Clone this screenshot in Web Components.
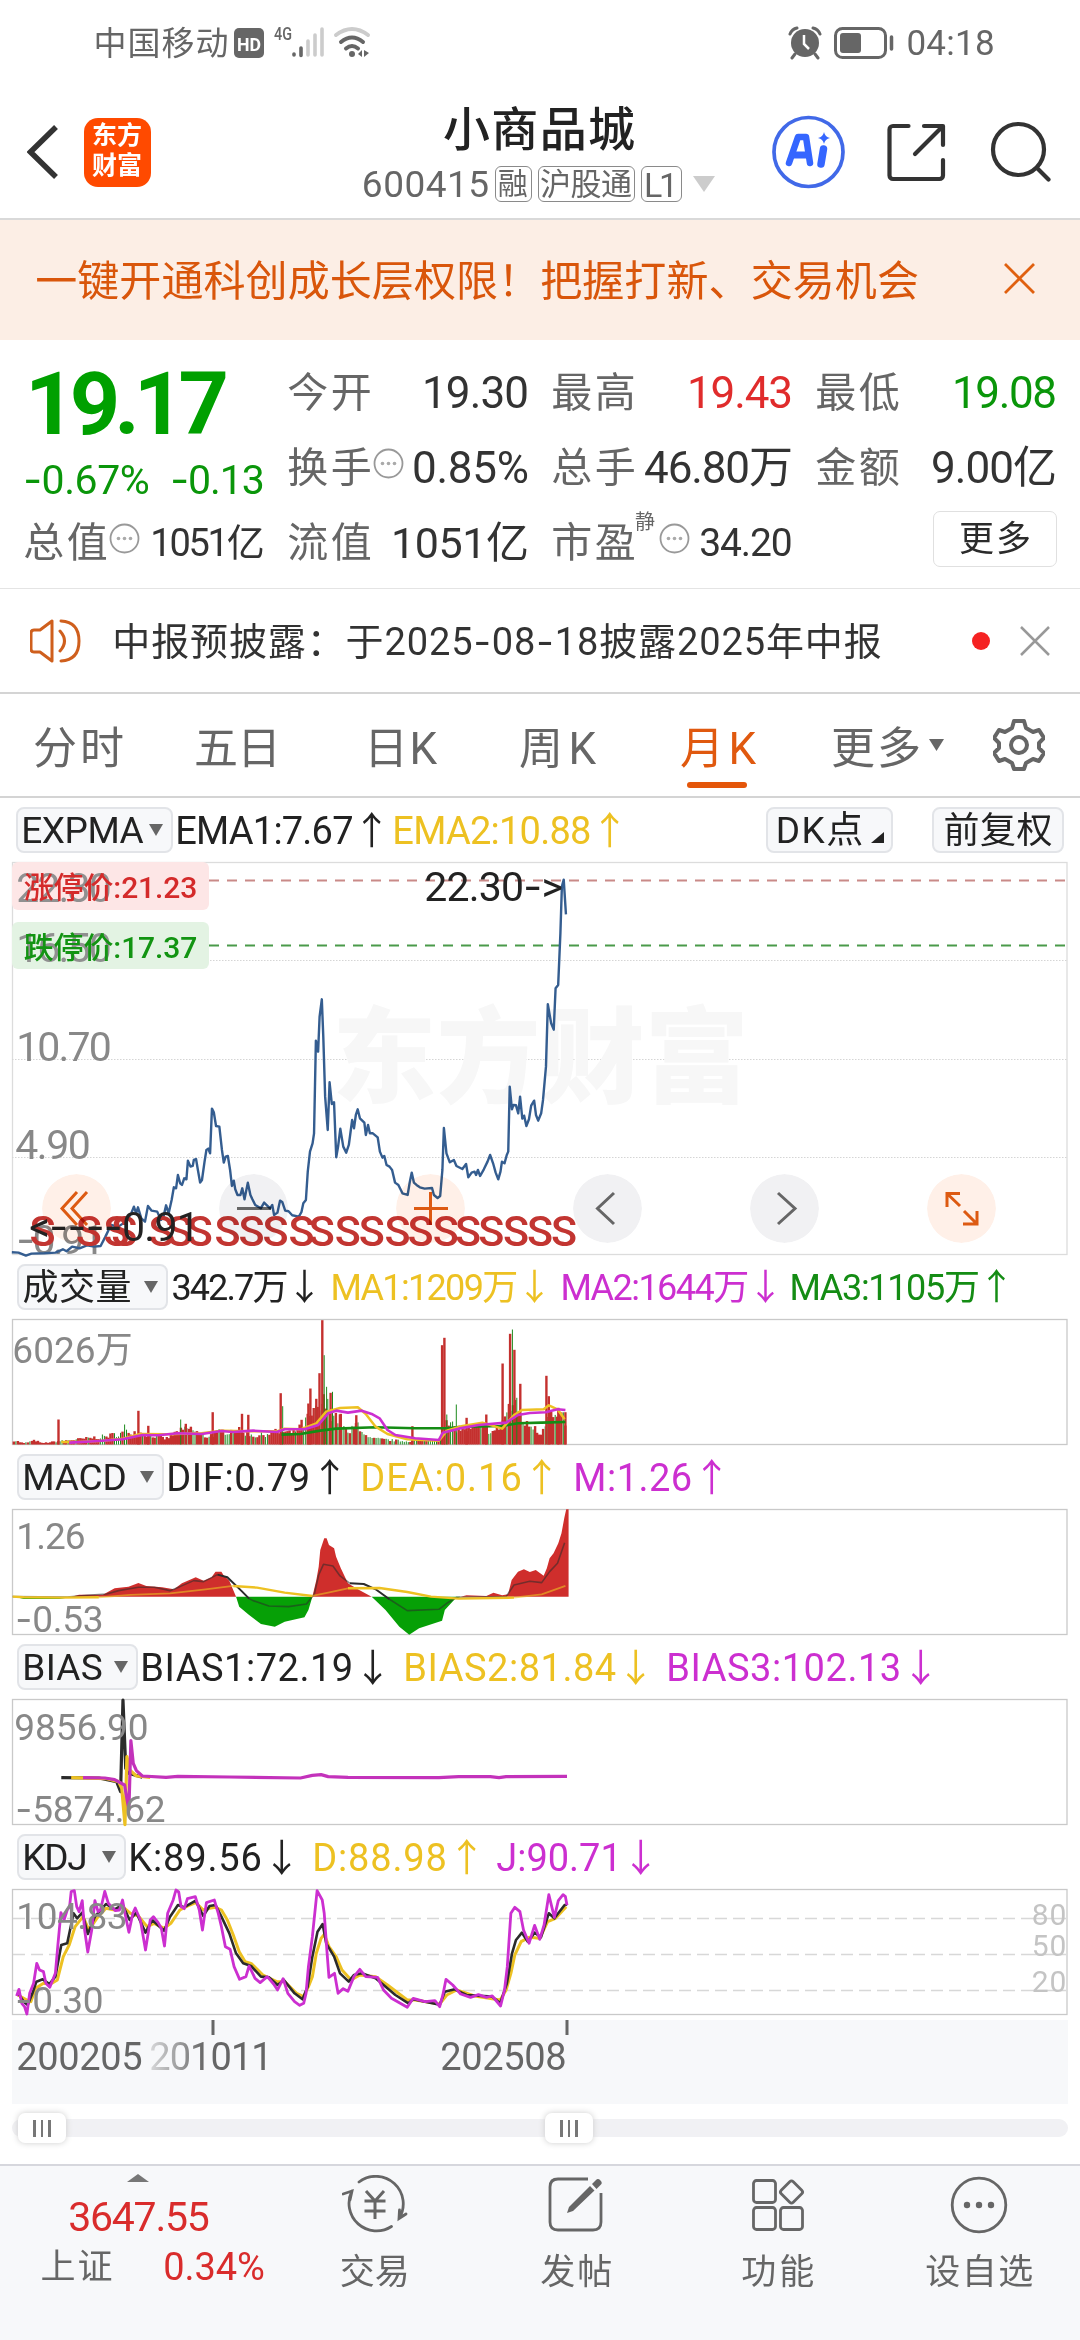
<!DOCTYPE html>
<html lang="zh-CN">
<head>
<meta charset="utf-8">
<title>小商品城 600415</title>
<style>
body{margin:0;width:1080px;height:2340px;overflow:hidden;background:#fff;color:#2b2b2b;font-family:Roboto,"Noto Sans CJK SC",sans-serif}
</style>
</head>
<body>
<stock-page></stock-page>
<script>
function define(name, css, html, setup){
  customElements.define(name, class extends HTMLElement{
    connectedCallback(){
      if(this.shadowRoot) return;
      const root=this.attachShadow({mode:'open'});
      const t=document.createElement('template');
      t.innerHTML='<style>:host{display:block;box-sizing:border-box}*{box-sizing:border-box}svg{display:block;flex:none}'+css+'</style>'+(typeof html==='function'?html(this):html);
      root.append(t.content.cloneNode(true));
      if(setup) setup(this,root);
    }
  });
}

/* One line of text at size s, spread by letter-spacing to fill width w */
define('fit-text',':host{display:block;flex:none;line-height:1;white-space:nowrap;padding-top:.04em}span{display:inline-block;margin-left:-.045em}','<span><slot></slot></span>',(el,root)=>{
  const s=+el.getAttribute('s'), w=+el.getAttribute('w'), n=[...el.textContent].length;
  el.style.fontSize=s+'px'; el.style.width=w+'px'; el.style.height=s*1.04+'px';
  if(el.hasAttribute('c')) el.style.color=el.getAttribute('c');
  if(el.hasAttribute('b')) el.style.fontWeight=el.getAttribute('b');
  const span=root.querySelector('span');
  const natural=span.getBoundingClientRect().width;
  if(n>1&&w) span.style.letterSpacing=(w+.09*s-natural)/(n-1)+'px';
});
/* Wide hyphen, taken from Inter */
const H='<span style="font-family:Inter">-</span>';
const HS='<tspan font-family="Inter">-</tspan>';

/* SVG label: left edge x, vertical centre cy, width w, font size s */
const T=(x,cy,w,s,c,t,extra='')=>`<text x="${x-.045*s}" y="${cy+.36*s}" font-size="${s}" fill="${c}" textLength="${w+.09*s}" ${extra}>${t}</text>`;
const chart=(y,h,body)=>`<svg width="1080" height="${h}" viewBox="0 ${y} 1080 ${h}" overflow="visible" fill="none">${body}</svg>`;
const frame=(y,h,c='#c9c9c9')=>`<rect x="12.5" y="${y+.5}" width="1054.5" height="${h-1}" stroke="${c}" stroke-width="1.3"/>`;
const line=(pts,c,w,o=1)=>`<polyline points="${pts}" stroke="${c}" stroke-width="${w}" stroke-opacity="${o}" stroke-linejoin="round" vector-effect="non-scaling-stroke"/>`;

define('status-bar',':host{display:flex;align-items:center;height:86px;padding:0 87px 0 95px;color:#666}.sp{flex:1}',`
<fit-text s="33" w="132">中国移动</fit-text>
<svg style="margin-left:7px" width="31" height="31"><rect width="30" height="30" rx="5" fill="#666"/><text x="3" y="22.5" font-size="19" font-weight="700" fill="#fff" textLength="24" lengthAdjust="spacingAndGlyphs">HD</text></svg>
<svg style="margin-left:9px" width="100" height="46" viewBox="274 20 100 46"><text x="274" y="40" font-size="18" font-weight="500" fill="#666" textLength="18" lengthAdjust="spacingAndGlyphs">4G</text>
<g stroke-linecap="round" stroke-width="3.6"><path d="M294 54v1M301 48v7.500" stroke="#666"/><path d="M308 41v14M315 35v20M322 29v26" stroke="#ccc"/></g>
<g fill="none" stroke-linecap="round" stroke-width="4"><path d="M336 35q16-12 32 0" stroke="#ccc"/><path d="M341 42q11-9 22 0M346 48.500q6-5 12 0" stroke="#666"/></g><circle cx="352" cy="54" r="3" fill="#666"/><path d="M358 54l4-4v7zM364 50v7l5-4z" fill="#666"/></svg>
<div class="sp"></div>
<svg width="34" height="34" viewBox="0 0 34 34"><circle cx="17" cy="17" r="14" fill="#666"/><path d="M2 8q2-5 7-6M25 2q5 1 7 6M7 28l-3 4M27 28l3 4" stroke="#666" stroke-width="3" fill="none" stroke-linecap="round"/><path d="M16 9v9l5 5" stroke="#fff" stroke-width="2.500" fill="none"/></svg>
<svg style="margin:0 13px 0 12px" width="61" height="32" viewBox="0 0 61 32"><rect x="1.500" y="1.500" width="50" height="29" rx="7" fill="none" stroke="#666" stroke-width="3"/><rect x="6" y="6" width="21" height="20" rx="3" fill="#666"/><path d="M57.500 10v12" stroke="#666" stroke-width="3.500" stroke-linecap="round"/></svg>
<fit-text s="35" w="85">04:18</fit-text>`);

define('app-header',`:host{display:flex;height:134px;border-bottom:2px solid #d9d9d9;padding:0 29px 0 27px}.side{flex:1;display:flex;height:132px}.logo{width:67px;height:69px;border-radius:14px;background:#ff4a00;margin:32px 0 0 25px;padding:4px 0 0 9px;display:flex;flex-direction:column;gap:4px}
.mid{display:flex;flex-direction:column;align-items:center;padding-top:18px;gap:12px;width:350px}.code{display:flex;align-items:center;gap:6px;color:#666;height:38px}.tag{height:36px;border:1.500px solid #8a8a8a;border-radius:6px;display:flex;align-items:center;justify-content:center}.right{justify-content:flex-end;gap:0}`,`
<div class="side"><svg style="margin-top:38px" width="32" height="57"><path d="M29 3L3.500 28L29 53" fill="none" stroke="#333" stroke-width="5.500"/></svg>
<div class="logo"><fit-text s="25" w="48" c="#fff" b="700">东方</fit-text><fit-text s="25" w="48" c="#fff" b="700">财富</fit-text></div></div>
<div class="mid"><fit-text s="47" w="188" b="500" c="#222">小商品城</fit-text>
<div class="code"><fit-text s="37" w="124">600415</fit-text><div class="tag" style="width:37px;margin-left:1px"><fit-text s="30" w="28">融</fit-text></div><div class="tag" style="width:97px"><fit-text s="31" w="89">沪股通</fit-text></div><div class="tag" style="width:41px"><fit-text s="34" w="31">L1</fit-text></div><svg style="margin-left:5px" width="22" height="16"><path d="M0 0h22L11 16z" fill="#ccc"/></svg></div></div>
<div class="side right"><svg width="284" height="132" viewBox="767 86 284 132" fill="none" stroke="#333" stroke-width="4.200" stroke-linecap="round" stroke-linejoin="round">
<circle cx="808.500" cy="152" r="34.500" stroke="#4169e8" stroke-width="3.700"/>
<path d="M789 163l9-26h8l4 26" stroke="#3566ff" stroke-width="6.500"/><path d="M794 155h13" stroke="#3566ff" stroke-width="7"/><path d="M823.500 149l-2.500 15" stroke="#3566ff" stroke-width="7.500"/><path d="M824 132q1 5 6 6q-5 1-6 6q-1-5-6-6q5-1 6-6z" fill="#3566ff" stroke="none"/>
<path d="M908.500 126h-15.500a3.500 3.500 0 0 0-3.500 3.500v46a3.500 3.500 0 0 0 3.500 3.500h46.500a3.500 3.500 0 0 0 3.500-3.500v-15.500M924 126h19v19M942 127l-27 27"/>
<circle cx="1018.500" cy="149.500" r="25.500"/><path d="M1037 168l11.500 11.500"/></svg></div>`);

define('promo-banner',':host{display:flex;align-items:center;justify-content:space-between;height:120px;background:#fceee5;padding:3px 44px 0 37px}',`<fit-text s="42" w="880" c="#d9560b">一键开通科创成长层权限！把握打新、交易机会</fit-text><svg style="margin-top:-6px" width="33" height="33"><path d="M2 2l29 29M31 2L2 31" stroke="#e0600f" stroke-width="2.800"/></svg>`);

define('more-dot',':host{width:31px;margin:-8px 0 0 3px;flex:none}',`<svg width="31" height="31" fill="#aaa"><circle cx="15.500" cy="15.500" r="14" fill="none" stroke="#999" stroke-width="1.800"/><circle cx="9.500" cy="15.500" r="1.800"/><circle cx="15.500" cy="15.500" r="1.800"/><circle cx="21.500" cy="15.500" r="1.800"/></svg>`);
define('quote-cell',':host{display:flex;align-items:center;justify-content:space-between;color:#333}.k{display:flex;align-items:center;color:#666}',el=>`<div class="k"><fit-text s="41" w="81">${el.getAttribute('k')}</fit-text><slot name="mark"></slot></div><slot></slot>`);
define('quote-panel',`:host{height:249px;border-bottom:1.500px solid #e4e4e4;padding:15px 24px 0 25px;display:flex;gap:26px}.c{display:flex;flex-direction:column}.c>*{height:75px}.first{width:238px}.c>.top{height:150px}.pct{display:flex;justify-content:space-between;padding-top:10px}
.c>.more{align-self:flex-end;width:124px;height:56px;border:1.500px solid #e0e0e0;border-radius:7px;display:flex;align-items:center;justify-content:center;margin:6px -2px 0 0}`,`
<div class="c first"><div class="top"><fit-text style="margin:1px 0 0 4px" s="88" w="196" b="700" c="#00a000">19.17</fit-text>
<div class="pct"><fit-text s="41" w="123" c="#0a960a">${H}0.67%</fit-text><fit-text s="41" w="91" c="#0a960a">${H}0.13</fit-text></div></div>
<quote-cell k="总值"><more-dot slot="mark"></more-dot><fit-text s="38" w="111">1051亿</fit-text></quote-cell></div>
<div class="c" style="width:238px"><quote-cell k="今开"><fit-text s="44" w="103">19.30</fit-text></quote-cell><quote-cell k="换手"><more-dot slot="mark"></more-dot><fit-text s="44" w="113">0.85%</fit-text></quote-cell><quote-cell k="流值"><fit-text s="43" w="134">1051亿</fit-text></quote-cell></div>
<div class="c" style="width:238px"><quote-cell k="最高"><fit-text s="44" w="102" c="#e02c2c">19.43</fit-text></quote-cell><quote-cell k="总手"><fit-text s="44" w="145">46.80万</fit-text></quote-cell><quote-cell k="市盈"><fit-text slot="mark" style="margin:-42px 0 0 2px" s="20" w="20">静</fit-text><more-dot slot="mark"></more-dot><fit-text s="39" w="90">34.20</fit-text></quote-cell></div>
<div class="c" style="width:238px"><quote-cell k="最低"><fit-text s="44" w="101" c="#0a960a">19.08</fit-text></quote-cell><quote-cell k="金额"><fit-text s="44" w="122">9.00亿</fit-text></quote-cell><div class="more"><fit-text s="35" w="69">更多</fit-text></div></div>`);

define('notice-bar',':host{display:flex;align-items:center;height:105px;border-bottom:2px solid #d4d4d4;padding:0 30px}.sp{flex:1}',`
<svg width="51" height="44" viewBox="0 0 51 44" fill="none" stroke="#cf5f1d" stroke-width="3" stroke-linecap="round" stroke-linejoin="round"><path d="M22 2v40L10 33H4q-3 0-3-3V14q0-3 3-3h6zM30 12q9 10 0 20M31 2q18 1 18 20T31 42"/></svg>
<fit-text style="margin-left:33px" s="38" w="766" c="#333">中报预披露：于2025${H}08${H}18披露2025年中报</fit-text><div class="sp"></div>
<svg width="18" height="18"><circle cx="9" cy="9" r="9" fill="#f52222"/></svg><svg style="margin-left:30px" width="30" height="30"><path d="M1 1l28 28M29 1L1 29" stroke="#999" stroke-width="2.500"/></svg>`);

define('period-tabs',`:host{display:flex;align-items:center;height:104px;border-bottom:2px solid #d4d4d4;padding:6px 0 0 35px;color:#666}.on{position:relative}.on i{position:absolute;left:5px;top:57px;width:60px;height:6px;border-radius:3px;background:#e4560a}.m{display:flex;align-items:center;gap:10px}`,`
<fit-text s="44" w="87">分时</fit-text><fit-text style="margin-left:74px" s="44" w="83">五日</fit-text><fit-text style="margin-left:87px" s="44" w="69">日K</fit-text><fit-text style="margin-left:86px" s="44" w="73">周K</fit-text><div class="on" style="margin-left:88px"><fit-text s="44" w="72" c="#e0590f">月K</fit-text><i></i></div>
<div class="m" style="margin-left:79px"><fit-text s="44" w="86">更多</fit-text><svg style="margin-top:-6px" width="15" height="12"><path d="M0 0h15L7.500 12z" fill="#666"/></svg></div>
<svg style="margin:-7px 0 0 49px" width="52" height="52" viewBox="-26 -26 52 52" fill="none" stroke="#666" stroke-width="4" stroke-linejoin="round"><path d="M-5 -24H5L7 -17L14 -13L20 -15L25 -7L20 -2V3L25 8L20 16L14 14L7 18L5 24H-5L-7 18L-14 14L-20 16L-25 8L-20 3V-2L-25 -7L-20 -15L-14 -13L-7 -17Z"/><circle r="8"/></svg>`);

/* Indicator heading: drop-down chip with its readings slotted after it */
define('indicator-head',`:host{display:flex;align-items:center;padding-left:17px}.chip{height:46px;border:2px solid #e2e4e8;border-radius:8px;background:#f7f8fa;display:flex;align-items:center;justify-content:space-between;padding:0 8px 0 5px;flex:none;color:#222}::slotted(.sp){flex:1}`,
el=>`<div class="chip" style="width:${el.getAttribute('cw')}px"><fit-text s="${el.getAttribute('s')||37}" w="${el.getAttribute('tw')}">${el.getAttribute('k')}</fit-text><svg width="14" height="12"><path d="M0 0h14L7 12z" fill="#666"/></svg></div><slot></slot>`);
define('corner-chip',':host{height:46px;border:2px solid #e2e4e8;border-radius:8px;background:#f7f8fa;display:flex;align-items:center;justify-content:center;flex:none;color:#222}','<slot></slot>');

const pricePts='32,1207 50,1208 70,1217 85,1211 120,1210 150,1208 170,1198 180,1204 195,1190 215,1195 235,1186 255,1190 272,1188 285,1160 300,1125 320,1130 340,1115 355,1090 362,1070 368,1090 373,1072 382,1105 392,1115 400,1068 410,1082 425,1085 435,1110 442,1100 449,1066 456,1090 464,1050 470,1012 476,1015 481,975 487,1000 492,1005 498,985 504,988 508,932 515,950 521,948 524,930 530,927 535,960 541,998 546,990 553,935 558,900 563,896 568,910 573,776 578,787 584,828 593,830 600,900 605,938 610,920 616,918 622,960 627,1008 632,992 636,1018 642,1035 650,1035 655,1015 661,1048 670,998 677,1035 682,1047 690,1065 705,1075 714,1058 730,1075 736,1065 741,1095 750,1088 757,1052 763,1056 771,1082 780,1084 790,1096 808,1100 815,1086 820,1060 827,1050 832,965 838,905 845,880 849,850 854,572 860,605 864,500 870,448 874,560 879,740 886,840 891,697 897,762 903,757 909,922 914,890 920,836 928,890 936,908 943,885 952,810 957,835 962,795 967,778 973,805 985,818 989,855 995,825 1000,850 1008,850 1021,862 1027,905 1034,923 1039,918 1045,945 1053,950 1060,960 1068,998 1077,1005 1088,1030 1102,1035 1108,995 1113,968 1119,998 1126,1005 1135,1012 1148,1016 1168,1014 1173,1035 1183,1044 1190,1038 1196,960 1200,834 1207,910 1216,937 1227,930 1234,948 1250,957 1260,942 1266,982 1275,968 1283,965 1287,975 1292,960 1298,978 1308,958 1318,935 1325,915 1333,940 1340,968 1347,988 1353,965 1357,935 1364,940 1370,915 1374,905 1378,710 1384,778 1388,765 1395,766 1401,790 1406,740 1412,806 1417,797 1423,828 1430,808 1436,767 1444,752 1449,795 1455,812 1463,790 1468,750 1476,650 1481,463 1490,520 1497,539 1502,415 1509,405 1515,250 1519,110 1524,89 1530,193';
const sX=[115,240,315,336,437,485,540,615,680,745,815,870,940,1005,1075,1137,1205,1265,1328,1395,1460,1525];
define('price-chart',`:host{height:393px;position:relative}.tools{position:absolute;left:42px;right:84px;top:312px;display:flex;justify-content:space-between;mix-blend-mode:multiply}.tools svg{border-radius:50%}`,
chart(862,393,frame(862,393,'#dcdcdc')
+'<path d="M12 960.500H1067M12 1059.500H1067M12 1157.500H1067" stroke="#d5d5d5" stroke-width="1.200" stroke-dasharray="1.500 1.500"/>'
+T(337,1058,407,104,'#f7f7f7','东方财富','font-weight="900"')
+'<rect x="12" y="862" width="197" height="48" rx="6" fill="#fde6e6"/><rect x="12" y="922" width="197" height="47" rx="6" fill="#e3f3e3"/>'
+T(18,887,92,41,'#909090','22.30')+T(18,947,92,41,'#909090','16.50')
+'<path d="M209 880.500H1065" stroke="#c98a88" stroke-width="2" stroke-dasharray="10 8"/><path d="M209 945.500H1065" stroke="#4a9a4a" stroke-width="2" stroke-dasharray="10 8"/>'
+T(18,1046,92,41,'#888','10.70')+T(17,1144,72,41,'#888','4.90')+T(18,1239,85,41,'#888',HS+'0.91')
+`<g transform="translate(0 850) scale(.3699 .3333)">${line(pricePts,'#345d90',2.4)}</g>`
+sX.map(x=>`<text x="${x*.3699}" y="1246" font-size="43" font-weight="500" text-anchor="middle" fill="#c23531">S</text>`).join('')
+T(25,887,171,30,'#d42a2a','涨停价:21.23','font-weight="500"')+T(25,947,171,30,'#129412','跌停价:17.37','font-weight="500"')
+T(426,886,135,41,'#222','22.30'+HS+'&gt;')+T(31,1226,167,41,'#222','&lt;'+HS+HS+HS+HS+'0.91'))
+'<div class="tools">'+[
['#ffe8dc','#dd5a12','M35 18L20 34.500L35 51M45 18L30 34.500L45 51'],
['#eaeaec','#666','M18 34.500H52'],
['#ffe8dc','#dd5a12','M18 34.500H52M34.500 18V51'],
['#eaeaec','#666','M41 19L24.500 34.500L41 50'],
['#eaeaec','#666','M28 19L45 34.500L28 50'],
['#ffe8dc','#dd5a12','M33 19.500H20V33M20 19.500L33 32M37 37L50 50M50 37V50H36']].map(b=>`<svg width="69" height="69" fill="none"><circle cx="34.500" cy="34.500" r="34.500" fill="${b[0]}" opacity=".65"/><path d="${b[2]}" stroke="${b[1]}" stroke-width="3"/></svg>`).join('')+'</div>');

function bars(){
  const base=[[32,18],[60,5],[90,16],[105,5],[145,12],[200,20],[270,32],[330,50],[375,40],[420,22],[440,42],[480,62],[520,30],[560,50],[600,55],[650,32],[690,48],[740,45],[770,85],[800,125],[820,160],[860,92],[880,40],[905,82],[930,24],[1030,12],[1110,22],[1125,85],[1150,65],[1180,60],[1220,65],[1250,48],[1270,85],[1290,150],[1310,130],[1330,75],[1355,72],[1365,35],[1385,115],[1410,100],[1432,95]];
  const peaks=[[148,75],[315,60,1],[350,101],[375,56],[457,75,1],[470,62],[538,97],[612,92],[628,89],[710,154],[715,115,1],[780,123],[785,168],[800,137],[808,214],[815,373],[820,268,1],[826,173,1],[836,155],[841,158,1],[862,92],[901,88],[1043,55],[1118,298],[1124,320],[1130,90,1],[1154,120,1],[1180,80],[1230,90],[1271,243],[1290,332],[1296,345,1],[1301,284],[1307,140,1],[1316,182],[1382,206],[1388,145],[1412,110],[1430,97]];
  let seed=7,out='';
  const rnd=()=>(seed=(seed*16807)%2147483647)/2147483647;
  const bar=(x,h,g)=>{out+=`<path d="M${(x*.3954).toFixed(1)} 1444.500V${(1444.5-h/3).toFixed(1)}" stroke="${g?'#1c8a1c':'#c4302e'}" stroke-width="${g?1:2.4}"/>`};
  for(let x=35;x<1434;x+=5.09){
    let i=1;while(i<base.length-1&&base[i][0]<x)i++;
    const a=base[i-1],b=base[i],v=a[1]+(b[1]-a[1])*(x-a[0])/(b[0]-a[0]);
    bar(x,v*(.55+.45*rnd()),rnd()<(x>880&&x<1110?.6:.28));
  }
  peaks.forEach(p=>bar(...p));
  return out;
}
define('volume-chart',':host{height:126px}',chart(1319,126,frame(1319,126)+bars()
+`<g transform="translate(0 1260) scale(.3954 .3333)">${line('712,524 760,522 810,512 850,506 950,502 1050,505 1130,505 1180,500 1270,498 1310,490 1370,488 1430,486','#148c14',2.6)}${line('155,546 200,546 260,542 310,536 355,522 420,523 510,520 560,512 640,514 700,514 720,506 760,508 800,490 825,455 860,444 905,442 925,462 950,500 980,522 1030,538 1110,542 1130,512 1170,498 1220,488 1270,506 1300,465 1320,450 1375,448 1388,436 1410,448 1428,478','#edc122',2.5)}${line('175,548 240,544 310,538 360,525 400,526 450,520 510,522 560,513 590,516 640,512 700,516 720,508 770,508 805,495 830,460 850,452 880,458 915,452 940,462 960,475 980,510 1000,525 1050,535 1110,540 1120,518 1160,506 1210,495 1280,488 1310,465 1340,459 1380,457 1410,448 1430,450','#cc2fd0',2.6)}</g>`
+T(14,1350,117,37,'#888','6026万')));

define('macd-chart',':host{height:126px}',chart(1509,126,frame(1509,126)
+`<g transform="translate(0 1260) scale(.3954 .3333)">
<path d="M180 1010L200 1004H260L290 985L325 980L350 969L370 978L410 982L440 988L460 970L495 952L515 962L535 952L545 935H560L565 945L580 962L597 1010ZM790 1010L800 960L806 920L810 870L820 835H826L832 855L845 865L850 890L862 925L880 970L905 988L940 1010ZM1165 1010L1180 1006L1230 1008L1248 998L1270 1006L1285 1003L1294 960L1310 935L1325 928L1340 936L1355 930L1375 947L1383 925L1390 895L1400 880L1412 850L1420 820L1427 775L1432 748H1438V1010Z" fill="#cf2e2c"/>
<path d="M597 1010L605 1040L630 1065L660 1092L695 1100L720 1085L770 1072L780 1050L790 1010ZM940 1010L975 1050L1010 1100L1035 1124L1060 1105L1118 1082L1125 1050L1150 1018L1165 1010ZM40 1011H180L150 1017H60Z" fill="#06a006"/>
${line('32,1010 170,1011 220,1006 270,1002 300,992 350,982 390,982 430,992 455,980 490,962 515,965 550,944','#2b2b2b',1.6,.55)}${line('550,944 575,952 610,992 630,1016','#2b2b2b',2)}${line('630,1016 640,1022 680,1038 730,1040 775,1032 795,1002 806,945 818,913 842,918 860,948 885,970','#2b2b2b',1.6,.55)}${line('885,970 920,972 950,988 985,1018','#2b2b2b',2)}${line('985,1018 1030,1052 1110,1048 1130,1030 1155,1012 1280,1010 1300,975 1340,964 1370,968 1390,935 1410,910 1428,848','#2b2b2b',1.6,.55)}
${line('32,1010 60,1012 150,1013 250,1012','#edc122',2.4)}${line('250,1012 330,1005 430,1000 520,988 590,978','#edc122',1.8,.6)}${line('590,978 650,983 720,998 790,1008','#edc122',2.4)}${line('790,1008 830,998 880,985','#edc122',1.8,.6)}${line('880,985 960,984 1030,996 1090,1010 1160,1016 1300,1013','#edc122',2.4)}${line('1300,1013 1370,1003 1430,978','#edc122',1.8,.6)}</g>`
+T(18,1536,66,37,'#888','1.26')+T(17,1619,85,37,'#888',HS+'0.53')));

define('bias-chart',':host{height:126px}',chart(1699,126,frame(1699,126)
+`<g transform="translate(0 1640) scale(.3954 .3333)">${line('155,413 250,414 295,425 305,455 311,180 318,385 325,400 360,412','#2b2b2b',3.2)}${line('180,413 270,416 300,425 308,445 316,554 321,350 328,390 345,408 380,412','#edc122',3.2)}${line('210,413 265,414 290,419 315,435 326,510 331,302 337,370 345,392 360,408 420,412 450,409 580,411 760,414 790,406 812,404 830,410 880,412 1110,413 1160,410 1240,410 1262,413 1280,410 1434,409','#c332bb',3.2)}</g>`
+T(16,1727,131,37,'#888','9856.90')+T(17,1809,147,37,'#888',HS+'5874.62')
));

define('kdj-chart',':host{height:126px}',chart(1889,126,frame(1889,126)
+'<path d="M13 1918.500H1033M13 1954.500H1033M13 1990.500H1033" stroke="#d8d8d8" stroke-width="1.300" stroke-dasharray="12 6"/><path d="M1033 1918.500H1066M1033 1954.500H1066M1033 1990.500H1066" stroke="#d8d8d8" stroke-width="1.300"/>'
+`<g transform="translate(0 1880) scale(.3954 .3333)">
${line('45,345 68,360 78,365 90,325 110,310 128,312 145,300 160,230 175,195 190,140 210,110 225,150 245,115 268,85 290,90 310,80 330,100 350,108 372,140 390,130 415,145 432,130 455,90 480,75 495,68 514,90 530,85 545,82 560,90 575,120 590,165 605,215 620,245 635,250 665,285 700,305 720,305 750,340 768,350 780,320 790,290 800,220 812,175 820,163 832,200 850,230 865,270 888,300 910,285 950,290 980,315 1030,360 1050,360 1112,372 1130,345 1155,330 1200,348 1265,360 1280,330 1292,280 1302,225 1318,185 1338,172 1365,175 1385,125 1405,115 1432,80','#edc122',3)}
${line('45,338 60,365 70,375 82,340 92,305 108,298 125,312 140,290 155,195 170,190 186,100 195,115 208,98 222,162 240,110 268,72 290,88 310,75 328,120 345,98 368,158 385,120 415,152 430,110 450,75 465,82 495,62 514,108 530,78 545,75 560,110 580,160 597,220 615,250 635,258 660,290 680,292 702,315 718,300 745,340 765,358 778,320 790,230 803,155 816,132 825,190 845,230 860,280 882,305 895,285 915,280 950,295 1000,345 1033,370 1045,358 1112,374 1125,335 1150,328 1180,345 1245,350 1265,370 1282,310 1295,220 1305,180 1320,158 1335,185 1352,158 1368,172 1388,100 1402,115 1428,75 1434,74','#2b2b2b',2.6)}
${line('42,348 48,328 55,370 62,380 68,402 75,340 85,310 93,250 100,270 110,275 116,310 126,322 140,280 146,200 154,98 162,120 170,90 176,80 180,35 188,32 194,80 200,95 208,62 214,150 222,216 232,150 240,62 248,95 254,90 265,34 274,70 282,80 292,92 302,90 310,60 316,100 326,157 336,100 342,84 355,120 368,210 380,120 388,110 400,128 408,145 416,198 424,100 438,60 445,30 452,36 458,80 466,86 474,56 494,50 504,90 512,150 522,68 542,60 552,100 560,140 570,200 582,208 592,260 606,298 622,290 630,258 645,295 658,308 676,290 692,312 702,330 716,296 728,340 745,365 758,376 768,370 774,340 780,260 790,170 802,32 815,60 820,100 826,200 832,292 846,280 855,340 868,326 880,334 895,290 910,268 925,290 955,292 970,330 990,355 1030,382 1045,355 1075,365 1100,362 1112,380 1120,345 1128,298 1145,315 1165,342 1190,352 1210,344 1230,352 1245,348 1266,378 1276,330 1283,260 1292,100 1302,82 1315,95 1324,150 1338,190 1352,136 1365,178 1376,135 1388,44 1402,112 1412,62 1424,44 1430,50 1434,76','#cc2fd0',2.8)}</g>`
+T(18,1916,108,37,'#888','104.83')+T(17,2000,85,37,'#888',HS+'0.30')
+T(1033,1914,32,30,'#c4c4c4','80')+T(1033,1945,32,30,'#c4c4c4','50')+T(1033,1981,32,30,'#c4c4c4','20')));

define('time-axis',':host{height:84px;margin:5px 12px 0;background:#f7f8fa}',`<svg width="1056" height="84" viewBox="12 2020 1056 84"><defs><linearGradient id="f" gradientUnits="userSpaceOnUse" x1="145" x2="205" y1="0" y2="0"><stop offset="0" stop-color="#666" stop-opacity=".15"/><stop offset="1" stop-color="#666"/></linearGradient></defs><path d="M213 2020v15M567 2020v15" stroke="#666" stroke-width="3"/>${T(18,2056,123,38,'#666','200205')}${T(151,2056,120,38,'url(#f)','201011')}${T(442,2056,123,38,'#666','202508')}</svg>`);

define('range-slider',':host{height:60px;padding:15px 12px 0}.t{height:18px;border-radius:9px;background:#f1f1f4;position:relative}i{position:absolute;top:-6px;width:48px;height:30px;border-radius:7px;background:#fff;box-shadow:0 0 6px #ccc;display:flex;align-items:center;justify-content:center;gap:5px}b{width:2.500px;height:17px;background:#777}','<div class="t"><i style="left:6px"><b></b><b></b><b></b></i><i style="left:533px"><b></b><b></b><b></b></i></div>');

define('nav-item',':host{display:flex;flex-direction:column;align-items:center;width:201.500px;padding-top:9px;gap:19px;color:#666}','<slot></slot>');
define('bottom-nav',`:host{height:176px;border-top:2px solid #d6d7dd;background:#f7f8fa;display:flex}.idx{width:274px;display:flex;flex-direction:column;padding-top:8px}.r{display:flex;justify-content:space-between;align-items:center;padding:0 11px 0 42px;margin-top:9px}svg{fill:none;stroke:#666;stroke-width:2.800}`,`
<div class="idx"><svg style="margin-left:127px" width="22" height="8"><path d="M0 8L11 0L22 8z" fill="#777" stroke="none"/></svg><fit-text style="margin:13px 0 0 70px" s="41" w="138" c="#d92c2c">3647.55</fit-text><div class="r"><fit-text s="35" w="69" c="#666">上证</fit-text><fit-text s="38" w="98" c="#d92c2c">0.34%</fit-text></div></div>
<nav-item><svg width="66" height="60" viewBox="-33 -30 66 60" stroke-linecap="round"><path d="M-16 -23A27.500 27.500 0 0 1 24 13.500M16.500 21.500A27.500 27.500 0 0 1 -23 -14M-32 -11L-23 -14L-25 -5M24.500 5L24 13.500L31 9" /><path d="M-9 -14L0 -4L9 -14M0 -4V14M-10.500 -4H10.500M-10.500 6H10.500" stroke-width="3" stroke-linecap="butt"/></svg><fit-text s="35" w="67">交易</fit-text></nav-item>
<nav-item><svg width="60" height="60" viewBox="-30 -30 60 60"><path d="M12 -26H-18Q-26 -26 -26 -18V17Q-26 25 -18 25H17Q25 25 25 17V-12"/><path d="M-9 8L-7 2L14 -19L18.500 -14.500L-3 6zM16 -21L20 -25Q22 -27 24.500 -24.500T24.500 -20L20.500 -16z" fill="#666" stroke="none"/></svg><fit-text s="35" w="69">发帖</fit-text></nav-item>
<nav-item><svg width="60" height="60" viewBox="-30 -30 60 60"><rect x="-24.500" y="-24.500" width="22" height="22" rx="3"/><rect x="-24.500" y="2.500" width="22" height="22" rx="3"/><rect x="2.500" y="2.500" width="22" height="22" rx="3"/><rect x="5" y="-21.500" width="17" height="17" rx="2.500" transform="rotate(45 13.500 -13)"/></svg><fit-text s="35" w="70">功能</fit-text></nav-item>
<nav-item><svg width="60" height="60" viewBox="-30 -30 60 60"><circle r="26.800"/><g fill="#666" stroke="none"><circle cx="-12" r="3.200"/><circle r="3.200"/><circle cx="12" r="3.200"/></g></svg><fit-text s="35" w="105">设自选</fit-text></nav-item>`);

const Y='#edc122',P='#cc2fd0',K='#222',G='#148c14';
const v=(ml,w,c,t,s=38)=>`<fit-text style="margin-left:${ml}px" s="${s}" w="${w}" c="${c}">${t}</fit-text>`;
define('stock-page','indicator-head{height:64px}',`
<status-bar></status-bar><app-header></app-header><promo-banner></promo-banner><quote-panel></quote-panel><notice-bar></notice-bar><period-tabs></period-tabs>
<indicator-head style="padding-left:16px" k="EXPMA" cw="157" tw="119">${v(4,212,K,'EMA1:7.67↑')}${v(5,233,Y,'EMA2:10.88↑')}<div class="sp"></div>
<corner-chip style="width:127px">${v(2,84,K,'DK点',37)}<svg style="margin:14px 0 0 9px" width="13" height="11"><path d="M13 0v11H0z" fill="#222"/></svg></corner-chip><corner-chip style="width:132px;margin:0 16px 0 39px">${v(0,106,K,'前复权',36)}</corner-chip></indicator-head>
<price-chart></price-chart>
<indicator-head k="成交量" cw="151" tw="106" s="36">${v(5,148,K,'342.7万↓',36)}${v(11,219,Y,'MA1:1209万↓',36)}${v(11,220,P,'MA2:1644万↓',36)}${v(9,222,G,'MA3:1105万↑',36)}</indicator-head>
<volume-chart></volume-chart>
<indicator-head k="MACD" cw="147" tw="101">${v(4,179,K,'DIF:0.79↑')}${v(15,197,Y,'DEA:0.16↑')}${v(16,154,P,'M:1.26↑')}</indicator-head>
<macd-chart></macd-chart>
<indicator-head k="BIAS" cw="121" tw="77">${v(4,248,K,'BIAS1:72.19↓')}${v(15,248,Y,'BIAS2:81.84↓')}${v(15,270,P,'BIAS3:102.13↓')}</indicator-head>
<bias-chart></bias-chart>
<indicator-head k="KDJ" cw="109" tw="62">${v(4,169,K,'K:89.56↓')}${v(15,170,Y,'D:88.98↑')}${v(14,160,P,'J:90.71↓')}</indicator-head>
<kdj-chart></kdj-chart>
<time-axis></time-axis><range-slider></range-slider><bottom-nav></bottom-nav>`);
</script>
</body>
</html>
